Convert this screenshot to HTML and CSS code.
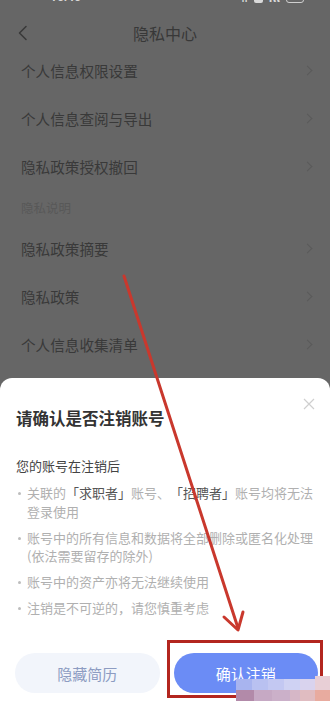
FILE: index.html
```html
<!DOCTYPE html>
<html lang="zh">
<head>
<meta charset="utf-8">
<link rel="stylesheet" href="styles.css">
</head>
<body>
<div class="screen">
  <div class="status">
    <span class="time">16:46</span>
    <span class="sicons">
      <span class="si">ǁ</span><span class="si box"></span><span class="si">ıll</span><span class="si batt"></span>
    </span>
  </div>
  <div class="nav">
    <svg class="back" width="12" height="16" viewBox="0 0 12 16"><path d="M9 1.5 L2.5 8 L9 14.5" fill="none" stroke="#3a3a3a" stroke-width="1.6" stroke-linecap="round" stroke-linejoin="round"/></svg>
    <div class="nav-title">隐私中心</div>
  </div>
  <div class="list">
    <div class="row"><span>个人信息权限设置</span><i class="chev"></i></div>
    <div class="row"><span>个人信息查阅与导出</span><i class="chev"></i></div>
    <div class="row"><span>隐私政策授权撤回</span><i class="chev"></i></div>
    <div class="section">隐私说明</div>
    <div class="row"><span>隐私政策摘要</span><i class="chev"></i></div>
    <div class="row"><span>隐私政策</span><i class="chev"></i></div>
    <div class="row"><span>个人信息收集清单</span><i class="chev"></i></div>
  </div>

  <div class="sheet">
    <svg class="close" width="12" height="12" viewBox="0 0 12 12"><path d="M1 1 L11 11 M11 1 L1 11" stroke="#cfcfcf" stroke-width="1.2"/></svg>
    <div class="sheet-title">请确认是否注销账号</div>
    <div class="sub">您的账号在注销后</div>
    <ul class="bullets">
      <li>关联的<b>「求职者」</b>账号、<b>「招聘者」</b>账号均将无法登录使用</li>
      <li>账号中的所有信息和数据将全部删除或匿名化处理(依法需要留存的除外)</li>
      <li>账号中的资产亦将无法继续使用</li>
      <li>注销是不可逆的，请您慎重考虑</li>
    </ul>
    <div class="actions">
      <div class="btn ghost">隐藏简历</div>
      <div class="btn primary">确认注销</div>
    </div>
  </div>

  <svg class="marks" width="330" height="701" viewBox="0 0 330 701">
    <line x1="124" y1="276" x2="238" y2="628" stroke="#c9382d" stroke-width="3" stroke-linecap="round"/>
    <path d="M224 617 L238 630 L243 612" fill="none" stroke="#c9382d" stroke-width="3" stroke-linecap="round" stroke-linejoin="round"/>
    <rect x="168.5" y="641.5" width="153" height="55" fill="none" stroke="#b3261f" stroke-width="3"/>
    <g class="mosaic">
      <rect x="236" y="679" width="16" height="11" fill="#a8b4ef"/>
      <rect x="252" y="679" width="16" height="11" fill="#b9c1f1"/>
      <rect x="268" y="679" width="16" height="11" fill="#c3c8f2"/>
      <rect x="284" y="679" width="16" height="11" fill="#cfd2f3"/>
      <rect x="300" y="679" width="15" height="11" fill="#d9d3ee"/>
      <rect x="315" y="676" width="15" height="14" fill="#e8cfd6"/>
      <rect x="236" y="690" width="18" height="11" fill="#b28aa9"/>
      <rect x="254" y="690" width="18" height="11" fill="#c6a9c4"/>
      <rect x="272" y="690" width="18" height="11" fill="#cbb0c9"/>
      <rect x="290" y="690" width="10" height="11" fill="#d6b7c7"/>
      <rect x="300" y="690" width="15" height="11" fill="#e0bcc1"/>
      <rect x="315" y="690" width="15" height="11" fill="#e8ab9f"/>
    </g>
  </svg>
</div>
</body>
</html>
```
FILE: styles.css
```css
* { box-sizing: border-box; margin: 0; padding: 0; }
html, body { width: 330px; height: 701px; overflow: hidden; }
body {
  background: #666666;
  font-family: "Noto Sans CJK SC", "Noto Sans", sans-serif;
}
.screen {
  position: relative;
  width: 330px;
  height: 701px;
  overflow: hidden;
  background: #666666;
}
.status {
  height: 20px;
  display: flex;
  justify-content: space-between;
  align-items: flex-start;
  padding: 0 26px 0 50px;
  color: #d9d9d9;
  font-size: 12px;
  line-height: 12px;
  overflow: hidden;
}
.time { margin-top: -9px; font-weight: 700; font-family: "Roboto", sans-serif; }
.sicons { display: flex; gap: 6px; margin-top: -9px; }
.si { font-size: 12px; line-height: 12px; font-weight: 700; }
.si.box { width: 9px; height: 12px; background: #d9d9d9; border-radius: 2px; }
.si.batt { width: 18px; height: 12px; border: 1.5px solid #cfcfcf; border-radius: 3px; }
.nav {
  position: relative;
  height: 26px;
  display: flex;
  align-items: center;
  justify-content: center;
}
.back { position: absolute; left: 17px; top: 5px; }
.nav-title { font-size: 16px; color: #383838; line-height: 26px; }
.list { display: flex; flex-direction: column; }
.row {
  height: 48px;
  display: flex;
  align-items: center;
  justify-content: space-between;
  padding: 0 19px 0 21px;
  font-size: 14.6px;
  color: #393939;
}
.chev {
  width: 7px;
  height: 7px;
  border-top: 1.2px solid #5a5a5a;
  border-right: 1.2px solid #5a5a5a;
  transform: rotate(45deg);
}
.section {
  height: 34px;
  display: flex;
  align-items: center;
  padding-left: 21px;
  font-size: 12.5px;
  color: #585858;
}
.sheet {
  position: absolute;
  left: 0;
  right: 0;
  bottom: 0;
  height: 323px;
  background: #ffffff;
  border-radius: 12px 12px 0 0;
  padding: 28px 12px 0 16px;
}
.close { position: absolute; right: 15px; top: 20px; }
.sheet-title {
  font-size: 16.5px;
  line-height: 24px;
  font-weight: 700;
  color: #333333;
}
.sub {
  margin-top: 26px;
  font-size: 13px;
  line-height: 20px;
  color: #444444;
}
.bullets {
  list-style: none;
  margin-top: 8px;
  padding-left: 11px;
  text-spacing-trim: space-all;
}
.bullets li {
  position: relative;
  font-size: 13px;
  line-height: 18.5px;
  color: #b0b0b0;
  margin-bottom: 7.5px;
}
.bullets li::before {
  content: "";
  position: absolute;
  left: -9px;
  top: 8px;
  width: 3px;
  height: 3px;
  border-radius: 50%;
  background: #bdbdbd;
}
.bullets b { font-weight: 400; color: #555555; }
.actions {
  position: absolute;
  left: 15px;
  right: 12px;
  top: 275px;
  display: flex;
  gap: 14px;
}
.btn {
  flex: 1;
  height: 40px;
  border-radius: 20px;
  display: flex;
  align-items: center;
  justify-content: center;
  font-size: 15px;
}
.btn.ghost { background: #f2f5fb; color: #8d9cc2; }
.btn.primary { background: #6b8cf5; color: #ffffff; }
.marks { position: absolute; left: 0; top: 0; pointer-events: none; }
```
